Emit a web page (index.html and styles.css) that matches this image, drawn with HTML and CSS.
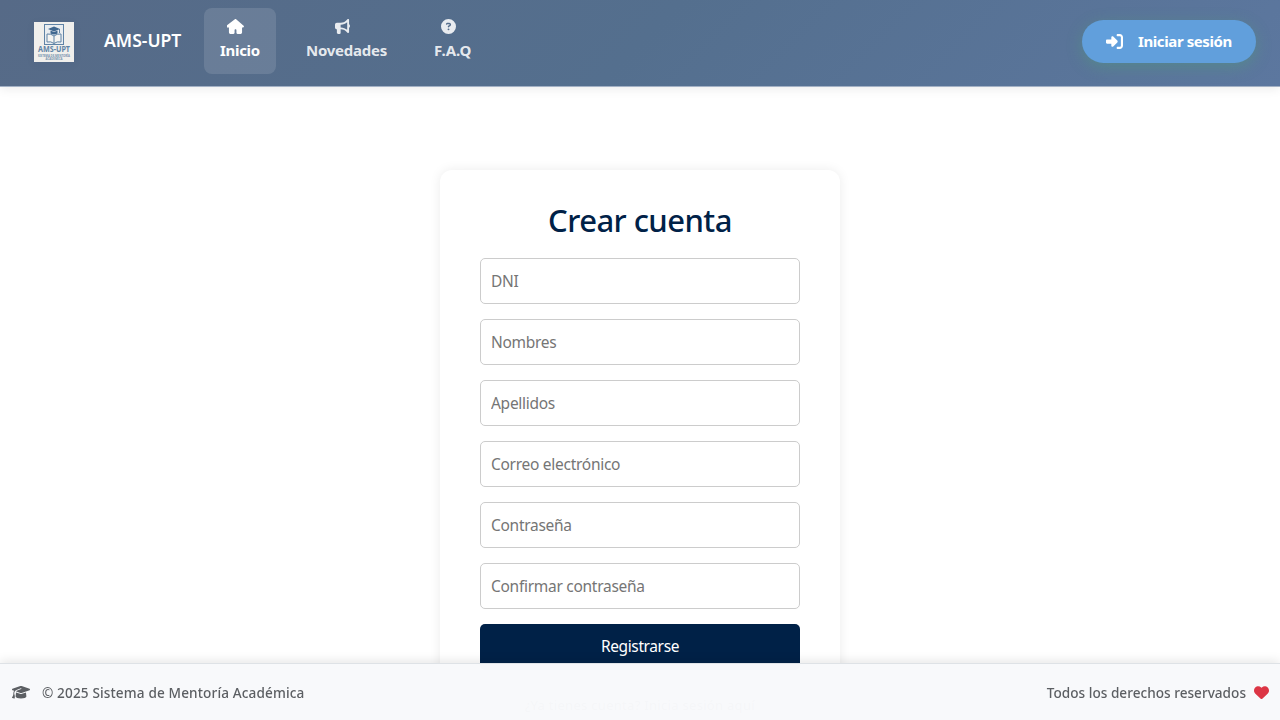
FILE: index.html
```html
<!DOCTYPE html>
<html lang="es">
<head>
<meta charset="utf-8">
<title>AMS-UPT - Crear cuenta</title>
<link rel="stylesheet" href="styles.css">
</head>
<body>
<header class="navbar">
  <svg class="logo" viewBox="0 0 40 40">
    <rect width="40" height="40" fill="#f0efec"/>
    <rect x="10.5" y="2.5" width="19" height="20" fill="#e9edf0" stroke="#5f83a6"/>
    <path d="M13 12v8q4-1 7 1.500q3-2.500 7-1.500v-8q-4-.5-7 2q-3-2.500-7-2z" fill="#f5f4f1" stroke="#5f83a6"/>
    <path d="M20 14v7.500" stroke="#5f83a6"/>
    <path d="M14 7l6-2.500L26 7l-6 2.500z" fill="#40678f"/>
    <path d="M16.500 8.500v3q3.500 2 7 0v-3L20 10z" fill="#40678f"/>
    <path d="M25.500 7v4" stroke="#40678f" stroke-width=".8"/>
    <text class="logo-name" x="20" y="30.300" textLength="32" lengthAdjust="spacingAndGlyphs">AMS-UPT</text>
    <text class="logo-sub" x="20" y="34.500" textLength="32" lengthAdjust="spacingAndGlyphs">SISTEMA DE MENTORÍA</text>
    <text class="logo-sub" x="20" y="38" textLength="17" lengthAdjust="spacingAndGlyphs">ACADÉMICA</text>
  </svg>
  <span class="brand">AMS-UPT</span>
  <nav class="nav">
    <a class="nav-link active">
      <svg class="nav-icon home" viewBox="0 0 576 512"><path d="M575.800 255.500c0 18-15 32.100-32 32.100l-32 0 .7 160.200c.2 35.500-28.500 64.300-64 64.300l-88.400 0c-22.100 0-40.100-17.900-40.100-40l0-88c0-17.700-14.300-32-32-32s-32 14.300-32 32l0 88c0 22.100-17.900 40-40 40l-88 0c-35.300 0-64-28.700-64-64l0-160.500-64 0c-18 0-32-14-32-32.100 0-9 3-17 10-24L266.400 8c7-7 15-8 22-8s15 2 21 7L564.800 231.500c8 7 12 15 11 24z"/></svg>
      <span class="nav-text t-inicio">Inicio</span>
    </a>
    <a class="nav-link">
      <svg class="nav-icon" viewBox="0 0 512 512"><path fill-rule="evenodd" d="M480 32c0-12.900-7.800-24.600-19.800-29.600s-25.700-2.200-34.900 6.900L381.700 53c-48 48-113.100 75-181 75L64 128c-35.300 0-64 28.700-64 64l0 96c0 35.300 28.700 64 64 64l0 128c0 17.700 14.300 32 32 32l64 0c17.700 0 32-14.300 32-32l0-128 8.700 0c67.900 0 133 27 181 75l43.600 43.600c9.200 9.200 22.900 11.900 34.900 6.900s19.800-16.600 19.800-29.600l0-147.600c18.600-8.800 32-32.500 32-60.400s-13.400-51.600-32-60.400L480 32zM416 109.300l0 261.400C357.200 317.800 280.500 288 200.700 288l-8.700 0 0-96 8.700 0c79.800 0 156.500-29.800 215.300-82.700z"/></svg>
      <span class="nav-text t-nov">Novedades</span>
    </a>
    <a class="nav-link">
      <svg class="nav-icon" viewBox="0 0 512 512"><path fill-rule="evenodd" d="M256 512A256 256 0 1 0 256 0a256 256 0 1 0 0 512zM169.800 165.300c7.900-22.300 29.100-37.300 52.800-37.300l58.300 0c34.900 0 63.100 28.300 63.100 63.100 0 22.600-12.100 43.500-31.700 54.800L280 264.400c-.2 13-10.900 23.600-24 23.600-13.300 0-24-10.700-24-24l0-13.500c0-8.600 4.600-16.500 12.100-20.800l44.300-25.400c4.700-2.700 7.600-7.700 7.600-13.100 0-8.400-6.800-15.100-15.100-15.100l-58.300 0c-3.400 0-6.400 2.100-7.500 5.300l-.4 1.200c-4.400 12.500-18.200 19-30.600 14.600s-19-18.200-14.600-30.600l.3-1.300zM224 352a32 32 0 1 1 64 0 32 32 0 1 1-64 0z"/></svg>
      <span class="nav-text t-faq">F.A.Q</span>
    </a>
  </nav>
  <a class="login">
    <svg class="login-icon" viewBox="0 0 512 512"><path d="M217.900 105.900L340.700 228.700c7.200 7.200 11.300 17.100 11.300 27.300s-4.100 20.100-11.300 27.300L217.900 406.100c-6.400 6.400-15 9.900-24 9.900-18.700 0-33.900-15.200-33.900-33.900l0-62.100-128 0c-17.700 0-32-14.300-32-32l0-64c0-17.700 14.300-32 32-32l128 0 0-62.100c0-18.700 15.200-33.900 33.900-33.900 9 0 17.600 3.600 24 9.900zM352 416l64 0c17.700 0 32-14.300 32-32l0-256c0-17.700-14.300-32-32-32l-64 0c-17.700 0-32-14.300-32-32s14.300-32 32-32l64 0c53 0 96 43 96 96l0 256c0 53-43 96-96 96l-64 0c-17.700 0-32-14.300-32-32s14.300-32 32-32z"/></svg>
    <span class="login-text">Iniciar sesión</span>
  </a>
</header>
<main class="page">
  <form class="card">
    <h2 class="title">Crear cuenta</h2>
    <input class="field" type="text" placeholder="DNI">
    <input class="field" type="text" placeholder="Nombres">
    <input class="field" type="text" placeholder="Apellidos">
    <input class="field" type="email" placeholder="Correo electrónico">
    <input class="field" type="password" placeholder="Contraseña">
    <input class="field" type="password" placeholder="Confirmar contraseña">
    <button class="submit" type="button">Registrarse</button>
    <p class="signin">¿Ya tienes cuenta? Inicia sesión aquí</p>
  </form>
</main>
<footer class="footer">
  <div class="footer-side">
    <svg class="cap" viewBox="0 0 640 512"><path d="M320 32c-8.100 0-16.100 1.400-23.700 4.100L15.800 137.400C6.300 140.900 0 149.900 0 160s6.300 19.100 15.800 22.600l57.900 20.900C57.300 229.300 48 259.800 48 291.900l0 28.100c0 28.400-10.800 57.700-22.300 80.800-6.500 13-13.900 25.800-22.500 37.600-3.200 4.300-4.100 9.900-2.300 15s6 8.900 11.200 10.200l64 16c4.200 1.100 8.700 .3 12.400-2s6.300-6.100 7.100-10.400c8.600-42.800 4.300-81.200-2.100-108.700C90.300 344.300 86 329.800 80 316.500l0-24.600c0-30.200 10.200-58.700 27.900-81.500 12.900-15.500 29.600-28 49.200-35.700l157-61.700c8.200-3.200 17.500 .8 20.700 9s-.8 17.500-9 20.700l-157 61.700c-12.400 4.900-23.300 12.400-32.200 21.600l159.600 57.600c7.600 2.700 15.600 4.100 23.700 4.100s16.100-1.400 23.700-4.100L624.200 182.600c9.500-3.400 15.800-12.500 15.800-22.600s-6.300-19.100-15.800-22.600L343.700 36.100C336.100 33.400 328.100 32 320 32zM128 408c0 35.300 86 72 192 72s192-36.700 192-72L496.700 262.600 354.500 314c-11.100 4-22.800 6-34.500 6s-23.500-2-34.500-6L143.300 262.600 128 408z"/></svg>
    <span class="copy">© 2025 Sistema de Mentoría Académica</span>
  </div>
  <div class="footer-side right">
    <span class="rights">Todos los derechos reservados</span>
    <svg class="heart" viewBox="0 0 512 512"><path d="M47.600 300.400L228.300 469.100c7.500 7 17.400 10.900 27.700 10.900s20.200-3.900 27.700-10.900L464.400 300.400c30.400-28.300 47.600-68 47.600-109.500v-5.800c0-69.900-50.500-129.500-119.400-141C347 36.500 300.600 51.400 268 84L256 96 244 84c-32.600-32.600-79-47.500-124.600-39.900C50.500 55.600 0 115.200 0 185.100v5.800c0 41.500 17.200 81.200 47.600 109.500z"/></svg>
  </div>
</footer>
</body>
</html>
```
FILE: styles.css
```css
* { box-sizing: border-box; }
body {
  margin: 0;
  height: 720px;
  overflow: hidden;
  background: #fff;
  font-family: "Segoe UI", "Noto Sans", "Open Sans", sans-serif;
}
svg { display: block; fill: currentColor; flex: none; }
span { white-space: nowrap; }
.navbar {
  display: flex;
  height: 87px;
  padding: 0 24px 0 34px;
  background: linear-gradient(135deg, #566a87 0%, #546f8e 50%, #5c779f 100%);
  border-bottom: 1px solid #a3b1c5;
  box-shadow: 0 2px 10px rgba(0, 0, 0, .08);
  color: #fff;
  font-weight: 600;
}
.logo { width: 40px; height: 40px; margin-top: 21.500px; box-shadow: 0 2px 8px rgba(40, 70, 110, .08); }
.logo-name { font: bold 8px "Noto Sans", sans-serif; text-anchor: middle; fill: #5f83a6; }
.logo-sub { font: bold 3px "Noto Sans", sans-serif; text-anchor: middle; fill: #7893ae; }
.brand { width: 78px; margin: 28px 22px 0 30px; font-size: 17.6px; line-height: 24px; letter-spacing: -.02px; }
.nav { display: flex; gap: 14px; padding-top: 8px; }
.nav-link {
  display: flex;
  flex-direction: column;
  height: 66px;
  padding: 11px 16px 0;
  border-radius: 8px;
  color: rgba(255, 255, 255, .87);
}
.nav-link.active { color: #fff; background: rgba(255, 255, 255, .12); }
.nav-icon { align-self: center; width: 15px; height: 15px; margin-right: 10px; }
.nav-icon.home { width: 17px; margin-right: 9px; }
.nav-text { margin-top: 5px; font-size: 15px; font-weight: 700; line-height: 22px; }
.t-inicio { width: 40px; letter-spacing: -.3px; }
.t-nov { width: 82px; letter-spacing: -.25px; }
.t-faq { width: 38px; letter-spacing: .05px; }
.login {
  display: flex;
  align-items: center;
  width: 174px;
  height: 43px;
  margin: 19.500px 0 0 auto;
  padding-left: 23.500px;
  border-radius: 22px;
  background: #619fdc;
  box-shadow: 0 4px 15px rgba(80, 160, 125, .45);
}
.login-icon { width: 17px; height: 17px; margin-right: 15.500px; }
.login-text { font-size: 15px; font-weight: 700; letter-spacing: -.4px; }
.page { display: flex; justify-content: center; padding-top: 83px; }
.card {
  display: flex;
  flex-direction: column;
  gap: 15px;
  width: 400px;
  height: 550px;
  padding: 30px 40px 0;
  border-radius: 12px 12px 0 0;
  background: #fff;
  box-shadow: 0 0 12px rgba(0, 0, 0, .08);
}
.title { margin: 0; height: 43px; color: #002147; font-size: 31px; font-weight: 500; line-height: 41px; text-align: center; letter-spacing: -.55px; white-space: nowrap; }
.field {
  flex: none;
  width: 100%;
  height: 46px;
  padding: 0 10px;
  border: 1px solid #ccc;
  border-radius: 5px;
  font: 15.500px "Segoe UI", "Noto Sans", sans-serif;
  letter-spacing: -.28px;
}
.field::placeholder { color: #757575; }
.submit {
  flex: none;
  height: 46px;
  padding: 0 0 2px;
  border: 0;
  border-radius: 5px;
  background: #002147;
  color: #fff;
  font: 15.500px "Segoe UI", "Noto Sans", sans-serif;
  letter-spacing: -.38px;
}
.signin { margin: 11px 0 0; font-size: 13px; text-align: center; line-height: 18px; letter-spacing: .3px; height: 18px; flex: none; }
.footer {
  position: fixed;
  inset: auto 0 0;
  display: flex;
  justify-content: space-between;
  align-items: center;
  height: 57px;
  padding: 1px 11px 0 12px;
  background: rgba(248, 249, 251, .988);
  border-top: 1px solid #dee2e6;
  box-shadow: 0 -2px 10px rgba(0, 0, 0, .1);
  color: #5c5f63;
  font-size: 13.6px;
  font-weight: 500;
}
.footer-side { display: flex; align-items: center; }
.cap { width: 18px; height: 14.400px; margin-right: 12px; }
.heart { width: 15px; height: 15px; margin: -1px .5px 0 7.500px; color: #dc3545; }
.copy { letter-spacing: .13px; }
.rights { letter-spacing: .01px; }
```
